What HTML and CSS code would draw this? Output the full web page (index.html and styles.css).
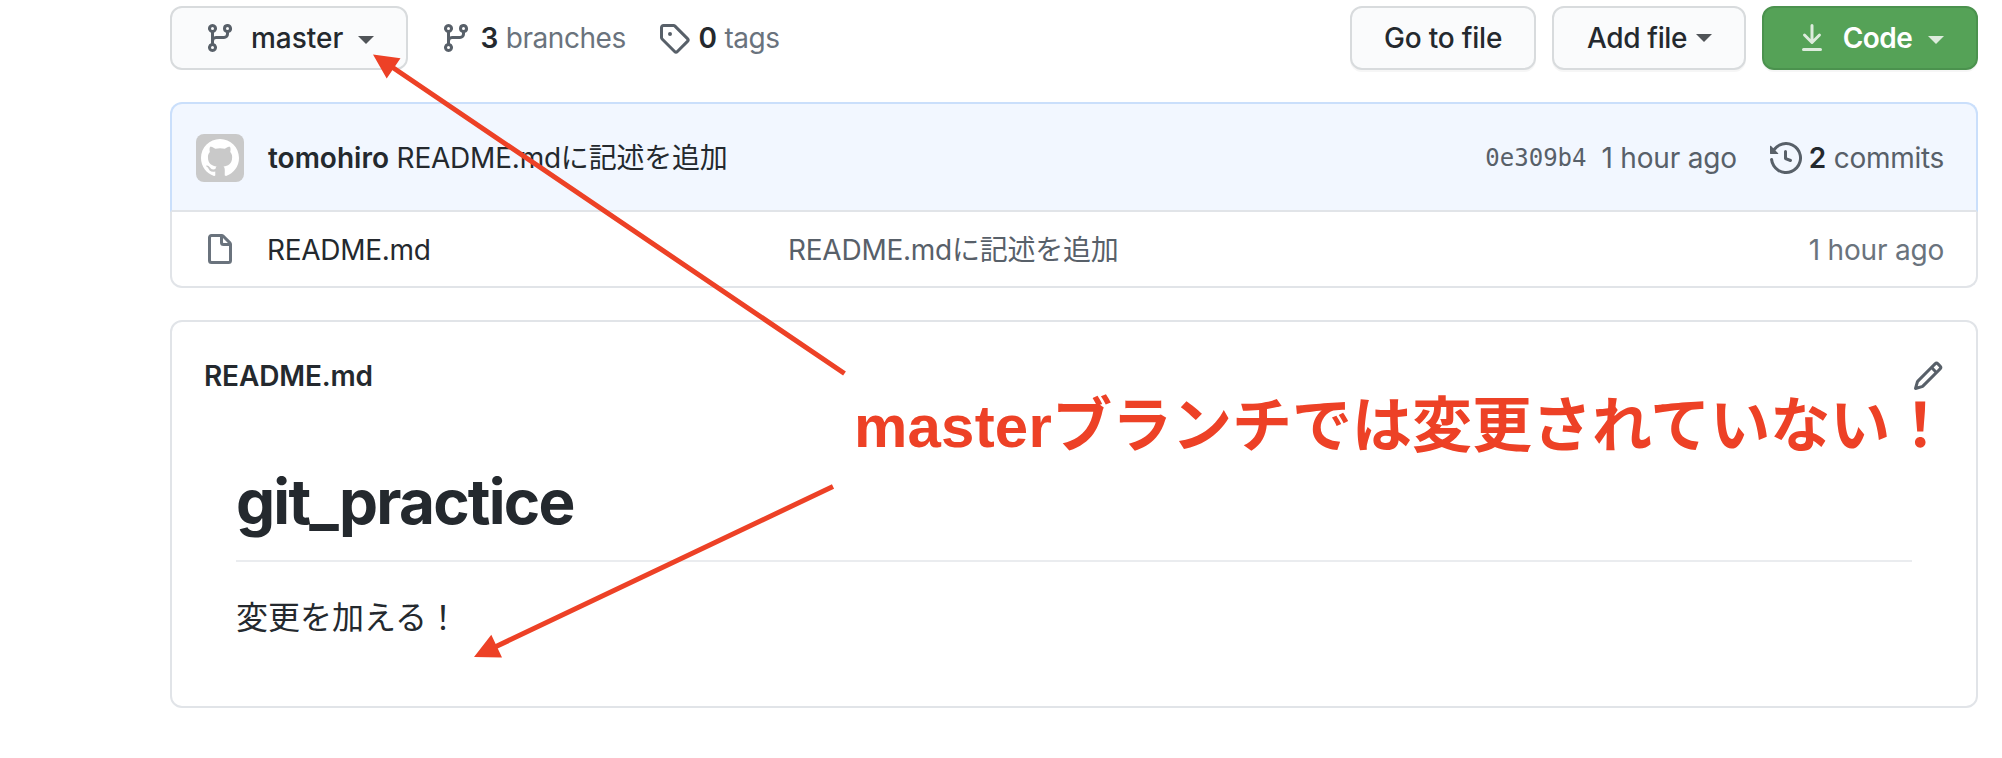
FILE: index.html
```html
<!DOCTYPE html>
<html lang="ja">
<head>
<meta charset="utf-8">
<title>git_practice</title>
<link rel="stylesheet" href="styles.css">
</head>
<body>
<svg class="defs" aria-hidden="true">
  <symbol id="branch" viewBox="0 0 16 16"><path fill-rule="evenodd" d="M11.75 2.5a.75.75 0 100 1.5.75.75 0 000-1.5zm-2.25.75a2.25 2.25 0 113 2.122V6A2.5 2.5 0 0110 8.5H6a1 1 0 00-1 1v1.128a2.251 2.251 0 11-1.5 0V5.372a2.25 2.25 0 111.5 0v1.836A2.492 2.492 0 016 7h4a1 1 0 001-1v-.628A2.25 2.25 0 019.5 3.25zM4.25 12a.75.75 0 100 1.5.75.75 0 000-1.5zM3.5 3.25a.75.75 0 111.5 0 .75.75 0 01-1.5 0z"/></symbol>
</svg>

<main class="page">
  <nav class="toolbar">
    <button class="btn btn-branch">
      <svg class="icon muted"><use href="#branch"/></svg>
      <span class="branch-name">master</span>
      <span class="caret"></span>
    </button>
    <a class="stat stat-branches">
      <svg class="icon"><use href="#branch"/></svg>
      <span class="stat-label"><strong>3</strong> branches</span>
    </a>
    <a class="stat">
      <svg class="icon" viewBox="0 0 16 16"><path fill-rule="evenodd" d="M2.5 7.775V2.75a.25.25 0 01.25-.25h5.025a.25.25 0 01.177.073l6.25 6.25a.25.25 0 010 .354l-5.025 5.025a.25.25 0 01-.354 0l-6.25-6.25a.25.25 0 01-.073-.177zm-1.5 0V2.75C1 1.784 1.784 1 2.75 1h5.025c.464 0 .91.184 1.238.513l6.25 6.25a1.75 1.75 0 010 2.474l-5.026 5.026a1.75 1.75 0 01-2.474 0l-6.25-6.25A1.75 1.75 0 011 7.775zM6 5a1 1 0 100 2 1 1 0 000-2z"/></svg>
      <span class="stat-label"><strong>0</strong> tags</span>
    </a>
    <div class="actions">
      <button class="btn btn-goto">Go to file</button>
      <button class="btn btn-add">Add file<span class="caret"></span></button>
      <button class="btn btn-code">
        <svg class="icon" viewBox="0 0 16 16"><path fill-rule="evenodd" d="M7.47 10.78a.75.75 0 001.06 0l3.75-3.75a.75.75 0 00-1.06-1.06L8.75 8.44V1.75a.75.75 0 00-1.5 0v6.69L4.78 5.97a.75.75 0 00-1.06 1.06l3.75 3.75zM3.75 13a.75.75 0 000 1.5h8.5a.75.75 0 000-1.5h-8.5z"/></svg>
        <span class="code-label">Code</span>
        <span class="caret"></span>
      </button>
    </div>
  </nav>

  <section class="files">
    <header class="commit">
      <span class="avatar"><svg viewBox="0 0 16 16"><path fill-rule="evenodd" d="M8 0C3.58 0 0 3.58 0 8c0 3.54 2.29 6.53 5.47 7.59.4.07.55-.17.55-.38 0-.19-.01-.82-.01-1.49-2.01.37-2.53-.49-2.69-.94-.09-.23-.48-.94-.82-1.13-.28-.15-.68-.52-.01-.53.63-.01 1.08.58 1.23.82.72 1.21 1.87.87 2.33.66.07-.52.28-.87.51-1.07-1.78-.2-3.64-.89-3.64-3.95 0-.87.31-1.59.82-2.15-.08-.2-.36-1.02.08-2.12 0 0 .67-.21 2.2.82.64-.18 1.32-.27 2-.27.68 0 1.36.09 2 .27 1.53-1.04 2.2-.82 2.2-.82.44 1.1.16 1.92.08 2.12.51.56.82 1.27.82 2.15 0 3.07-1.87 3.75-3.65 3.95.29.25.54.73.54 1.48 0 1.07-.01 1.93-.01 2.2 0 .21.15.46.55.38A8.013 8.013 0 0016 8c0-4.42-3.58-8-8-8z"/></svg></span>
      <span class="commit-text"><strong>tomohiro</strong> README.mdに記述を追加</span>
      <code class="hash">0e309b4</code>
      <span class="time">1 hour ago</span>
      <a class="history">
        <svg class="icon" viewBox="0 0 16 16"><path fill-rule="evenodd" d="M1.643 3.143L.427 1.927A.25.25 0 000 2.104V5.75c0 .138.112.25.25.25h3.646a.25.25 0 00.177-.427L2.715 4.215a6.5 6.5 0 11-1.18 4.458.75.75 0 10-1.493.154 8.001 8.001 0 101.6-5.684zM7.75 4a.75.75 0 01.75.75v2.992l2.028.812a.75.75 0 01-.557 1.392l-2.5-1A.75.75 0 017 8.25v-3.5A.75.75 0 017.75 4z"/></svg>
        <span><strong>2</strong> commits</span>
      </a>
    </header>
    <div class="file-row">
      <svg class="icon" viewBox="0 0 16 16"><path fill-rule="evenodd" d="M3.75 1.5a.25.25 0 00-.25.25v11.5c0 .138.112.25.25.25h8.5a.25.25 0 00.25-.25V6H9.75A1.75 1.75 0 018 4.25V1.5H3.75zm5.75.56v2.19c0 .138.112.25.25.25h2.19L9.5 2.06zM2 1.75C2 .784 2.784 0 3.75 0h5.086c.464 0 .909.184 1.237.513l3.414 3.414c.329.328.513.773.513 1.237v8.086A1.75 1.75 0 0112.25 15h-8.5A1.75 1.75 0 012 13.25V1.75z"/></svg>
      <span class="file-name">README.md</span>
      <span class="file-message">README.mdに記述を追加</span>
      <span class="time">1 hour ago</span>
    </div>
  </section>

  <section class="readme">
    <header class="readme-head">
      <h2>README.md</h2>
      <svg class="icon" viewBox="0 0 16 16"><path fill-rule="evenodd" d="M11.013 1.427a1.75 1.75 0 012.474 0l1.086 1.086a1.75 1.75 0 010 2.474l-8.61 8.61c-.21.21-.47.364-.756.445l-3.251.93a.75.75 0 01-.927-.928l.929-3.25a1.75 1.75 0 01.445-.758l8.61-8.61zm1.414 1.06a.25.25 0 00-.354 0L10.811 3.75l1.439 1.44 1.263-1.263a.25.25 0 000-.354l-1.086-1.086zM11.189 6.25L9.75 4.81l-6.286 6.287a.25.25 0 00-.064.108l-.558 1.953 1.953-.558a.249.249 0 00.108-.064l6.286-6.286z"/></svg>
    </header>
    <article class="markdown">
      <h1>git_practice</h1>
      <p>変更を加える！</p>
    </article>
  </section>
</main>

<svg class="arrows" viewBox="0 0 2002 758" aria-hidden="true">
  <path class="shaft" d="M844.5 373.5L392 67M833 486.5L495 647"/>
  <path class="head" d="M373 54.500L400.500 58.300L386.700 78.500zM474 657L491.300 634.800L502 657.500z"/>
</svg>
<p class="note"><span>master</span>ブランチでは変更されていない！</p>
</body>
</html>
```
FILE: styles.css
```css
* { box-sizing: border-box; }

body {
  margin: 0;
  background: #fff;
  color: #24292e;
  font: 400 28px/42px Inter, "Noto Sans CJK JP", sans-serif;
  white-space: nowrap;
}

h1, h2, p { margin: 0; }
strong { font-weight: 600; color: #24292e; letter-spacing: 0; }

.defs { position: absolute; width: 0; height: 0; }
.icon { width: 32px; height: 32px; flex: none; fill: currentColor; }
.muted { color: #586069; }

.page { padding: 6px 24px 0 170px; }

/* Toolbar */
.toolbar { display: flex; align-items: center; height: 64px; }

.btn {
  display: flex;
  align-items: center;
  height: 64px;
  padding: 0 32px;
  border: 2px solid #d8dbdd;
  border-radius: 12px;
  background: #fafbfc;
  box-shadow: 0 2px 0 rgba(27, 31, 35, .04);
  color: #24292e;
  font: 500 28px/42px Inter, sans-serif;
}

.caret {
  flex: none;
  border: 8px solid transparent;
  border-top-color: #505458;
  border-bottom: 0;
}

.btn-branch { width: 238px; box-shadow: none; }
.branch-name { width: 92px; margin: 0 15px 0 15px; }
.btn-branch .caret, .btn-code .caret { margin-top: 4px; }

.stat { display: flex; align-items: center; margin-left: 32px; color: #586069; }
.stat-branches { width: 186px; }
.stat-label { margin-left: 8.5px; color: #6a737d; letter-spacing: -.45px; }

.actions { display: flex; gap: 16px; margin-left: auto; }
.btn-goto { width: 186px; letter-spacing: -.2px; }
.btn-add { width: 194px; padding-left: 33px; letter-spacing: -.35px; }
.btn-add .caret { margin-left: 9px; }
.btn-code {
  width: 216px;
  border-color: #4b924e;
  background: #55a257;
  color: #ddecdd;
}
.code-label { width: 71px; margin: 0 15px 0 14px; color: #fff; font-weight: 600; letter-spacing: -.5px; }
.btn-code .caret { border-top-color: #ddecdd; }

/* Commit summary and file list */
.files { margin-top: 32px; }

.commit {
  display: flex;
  align-items: center;
  height: 110px;
  padding: 2px 32px 0 24px;
  border: 2px solid #cadffb;
  border-bottom-color: #e1e4e8;
  border-radius: 12px 12px 0 0;
  background: #f2f7ff;
  color: #586069;
}

.avatar {
  display: flex;
  align-items: center;
  justify-content: center;
  width: 48px;
  height: 48px;
  border-radius: 8px;
  background: #c9c9c9;
}
.avatar svg { width: 38px; height: 38px; fill: #fff; }
.commit-text { margin-left: 24px; color: #24292e; letter-spacing: -.22px; }
.hash { margin-left: auto; font: 24px/42px "DejaVu Sans Mono", monospace; }
.time { letter-spacing: -.2px; }
.commit .time { margin-left: 15px; }
.history { display: flex; align-items: center; margin-left: 33px; letter-spacing: -.3px; }
.history span { margin-left: 7px; }

.file-row {
  display: flex;
  align-items: center;
  height: 76px;
  padding: 2px 32px 0;
  border: 2px solid #e1e4e8;
  border-top: 0;
  border-radius: 0 0 12px 12px;
  color: #6a737d;
}
.file-name { width: 521px; margin-left: 31px; color: #24292e; letter-spacing: -.3px; }
.file-message { margin-right: auto; color: #586069; letter-spacing: -.25px; }

/* Readme */
.readme {
  height: 388px;
  margin-top: 32px;
  border: 2px solid #e1e4e8;
  border-radius: 12px;
}
.readme-head {
  display: flex;
  align-items: center;
  justify-content: space-between;
  height: 108px;
  padding: 0 32px;
}
.readme-head .icon { color: #586069; }
.readme-head h2 { font-size: 28px; font-weight: 600; letter-spacing: -.15px; }

.markdown { margin: 32px 64px 0; }
.markdown h1 {
  height: 100px;
  border-bottom: 2px solid #eaecef;
  font-size: 62px;
  font-weight: 650;
  line-height: 80px;
  letter-spacing: -1.8px;
}
.markdown p { margin-top: 32px; font-size: 32px; line-height: 48px; }

/* Callout drawn over the page */
.arrows { position: absolute; top: 0; left: 0; width: 2002px; height: 758px; }
.shaft { fill: none; stroke: #ed4126; stroke-width: 5; }
.head { fill: #ed4126; }
.note {
  position: absolute;
  top: 397px;
  left: 854px;
  color: #ed4126;
  font: 700 60px/60px "Liberation Sans", "Noto Sans CJK JP", sans-serif;
}
.note span { letter-spacing: .2px; }
```
